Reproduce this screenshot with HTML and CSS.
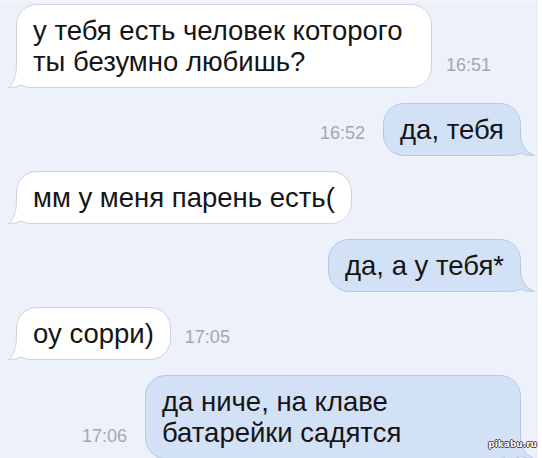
FILE: index.html
```html
<!DOCTYPE html>
<html lang="ru">
<head>
<meta charset="utf-8">
<link rel="stylesheet" href="styles.css">
</head>
<body>
<div class="chat">
  <div class="row in">
    <div class="bubble white first">
      <svg class="tail tail-left" width="26" height="24" viewBox="0 0 26 24"><path class="fill" d="M8.5 0 C8.5 12 6 19 0.5 23.5 C6 23.5 10 22.5 13 21 C16 22.8 20 23.5 26 23.5 L26 0 Z"/><path class="line" d="M8.5 0 C8.5 12 6 19 0.5 23.5 C6 23.5 10 22.5 13 21 C16 22.8 20 23.5 26 23.5"/></svg>
      <span class="text">у тебя есть человек которого<br>ты безумно любишь?</span>
    </div>
    <span class="time">16:51</span>
  </div>
  <div class="row out">
    <span class="time">16:52</span>
    <div class="bubble blue">
      <svg class="tail tail-right" width="30" height="24" viewBox="0 0 30 24"><path class="fill" d="M15.5 0 C15.5 12 19 19 29.5 23.5 C23 23.5 19 22.5 16 21 C13 22.8 9 23.5 0 23.5 L0 0 Z"/><path class="line" d="M15.5 0 C15.5 12 19 19 29.5 23.5 C23 23.5 19 22.5 16 21 C13 22.8 9 23.5 0 23.5"/></svg>
      <span class="text">да, тебя</span>
    </div>
  </div>
  <div class="row in">
    <div class="bubble white">
      <svg class="tail tail-left" width="26" height="24" viewBox="0 0 26 24"><path class="fill" d="M8.5 0 C8.5 12 6 19 0.5 23.5 C6 23.5 10 22.5 13 21 C16 22.8 20 23.5 26 23.5 L26 0 Z"/><path class="line" d="M8.5 0 C8.5 12 6 19 0.5 23.5 C6 23.5 10 22.5 13 21 C16 22.8 20 23.5 26 23.5"/></svg>
      <span class="text">мм у меня парень есть(</span>
    </div>
  </div>
  <div class="row out">
    <div class="bubble blue">
      <svg class="tail tail-right" width="30" height="24" viewBox="0 0 30 24"><path class="fill" d="M15.5 0 C15.5 12 19 19 29.5 23.5 C23 23.5 19 22.5 16 21 C13 22.8 9 23.5 0 23.5 L0 0 Z"/><path class="line" d="M15.5 0 C15.5 12 19 19 29.5 23.5 C23 23.5 19 22.5 16 21 C13 22.8 9 23.5 0 23.5"/></svg>
      <span class="text">да, а у тебя*</span>
    </div>
  </div>
  <div class="row in">
    <div class="bubble white">
      <svg class="tail tail-left" width="26" height="24" viewBox="0 0 26 24"><path class="fill" d="M8.5 0 C8.5 12 6 19 0.5 23.5 C6 23.5 10 22.5 13 21 C16 22.8 20 23.5 26 23.5 L26 0 Z"/><path class="line" d="M8.5 0 C8.5 12 6 19 0.5 23.5 C6 23.5 10 22.5 13 21 C16 22.8 20 23.5 26 23.5"/></svg>
      <span class="text">оу сорри)</span>
    </div>
    <span class="time">17:05</span>
  </div>
  <div class="row out">
    <span class="time">17:06</span>
    <div class="bubble blue wide">
      <svg class="tail tail-right" width="30" height="24" viewBox="0 0 30 24"><path class="fill" d="M15.5 0 C15.5 12 19 19 29.5 23.5 C23 23.5 19 22.5 16 21 C13 22.8 9 23.5 0 23.5 L0 0 Z"/><path class="line" d="M15.5 0 C15.5 12 19 19 29.5 23.5 C23 23.5 19 22.5 16 21 C13 22.8 9 23.5 0 23.5"/></svg>
      <span class="text">да ниче, на клаве<br>батарейки садятся</span>
    </div>
  </div>
</div>
<div class="watermark">pikabu.ru</div>
</body>
</html>
```
FILE: styles.css
```css
html, body {
  margin: 0;
  padding: 0;
}
body {
  width: 542px;
  height: 458px;
  overflow: hidden;
  position: relative;
  background: #ffffff;
  font-family: "Liberation Sans", Arial, sans-serif;
}
.chat {
  box-sizing: border-box;
  width: 538px;
  height: 458px;
  background: #edf1f9;
  border-top: 2px solid #f3f5fa;
  padding: 2px 17px 0 16px;
  display: flex;
  flex-direction: column;
  gap: 15px;
}
.row {
  display: flex;
  align-items: flex-end;
  gap: 14px;
}
.row.out {
  justify-content: flex-end;
  gap: 18px;
}
.bubble {
  box-sizing: border-box;
  position: relative;
  padding: 10px 16px;
  border: 1px solid;
  border-radius: 21px;
  font-size: 27.5px;
  line-height: 31px;
  color: #151515;
  white-space: nowrap;
}
.bubble.first {
  width: 416px;
}
.bubble.wide {
  width: 376px;
}
.bubble .text {
  position: relative;
}
.white {
  background: #ffffff;
  border-color: #cfd4dc;
}
.blue {
  background: #d3e1f6;
  border-color: #b6c7e2;
}
.tail {
  position: absolute;
  bottom: -1px;
  display: block;
}
.tail-left {
  left: -9px;
}
.tail-right {
  right: -15px;
}
.tail .line {
  fill: none;
  stroke-width: 1;
}
.white .tail .fill { fill: #ffffff; }
.white .tail .line { stroke: #cfd4dc; }
.blue .tail .fill { fill: #d3e1f6; }
.blue .tail .line { stroke: #b6c7e2; }
.time {
  font-size: 18px;
  color: #a0a8b4;
  padding-bottom: 12px;
}
.watermark {
  position: absolute;
  right: 5px;
  bottom: 9px;
  font-family: "DejaVu Sans", sans-serif;
  font-weight: bold;
  font-size: 9px;
  color: #ffffff;
  text-shadow: 1px 0 0 #444, -1px 0 0 #444, 0 1px 0 #444, 0 -1px 0 #444;
}
```
